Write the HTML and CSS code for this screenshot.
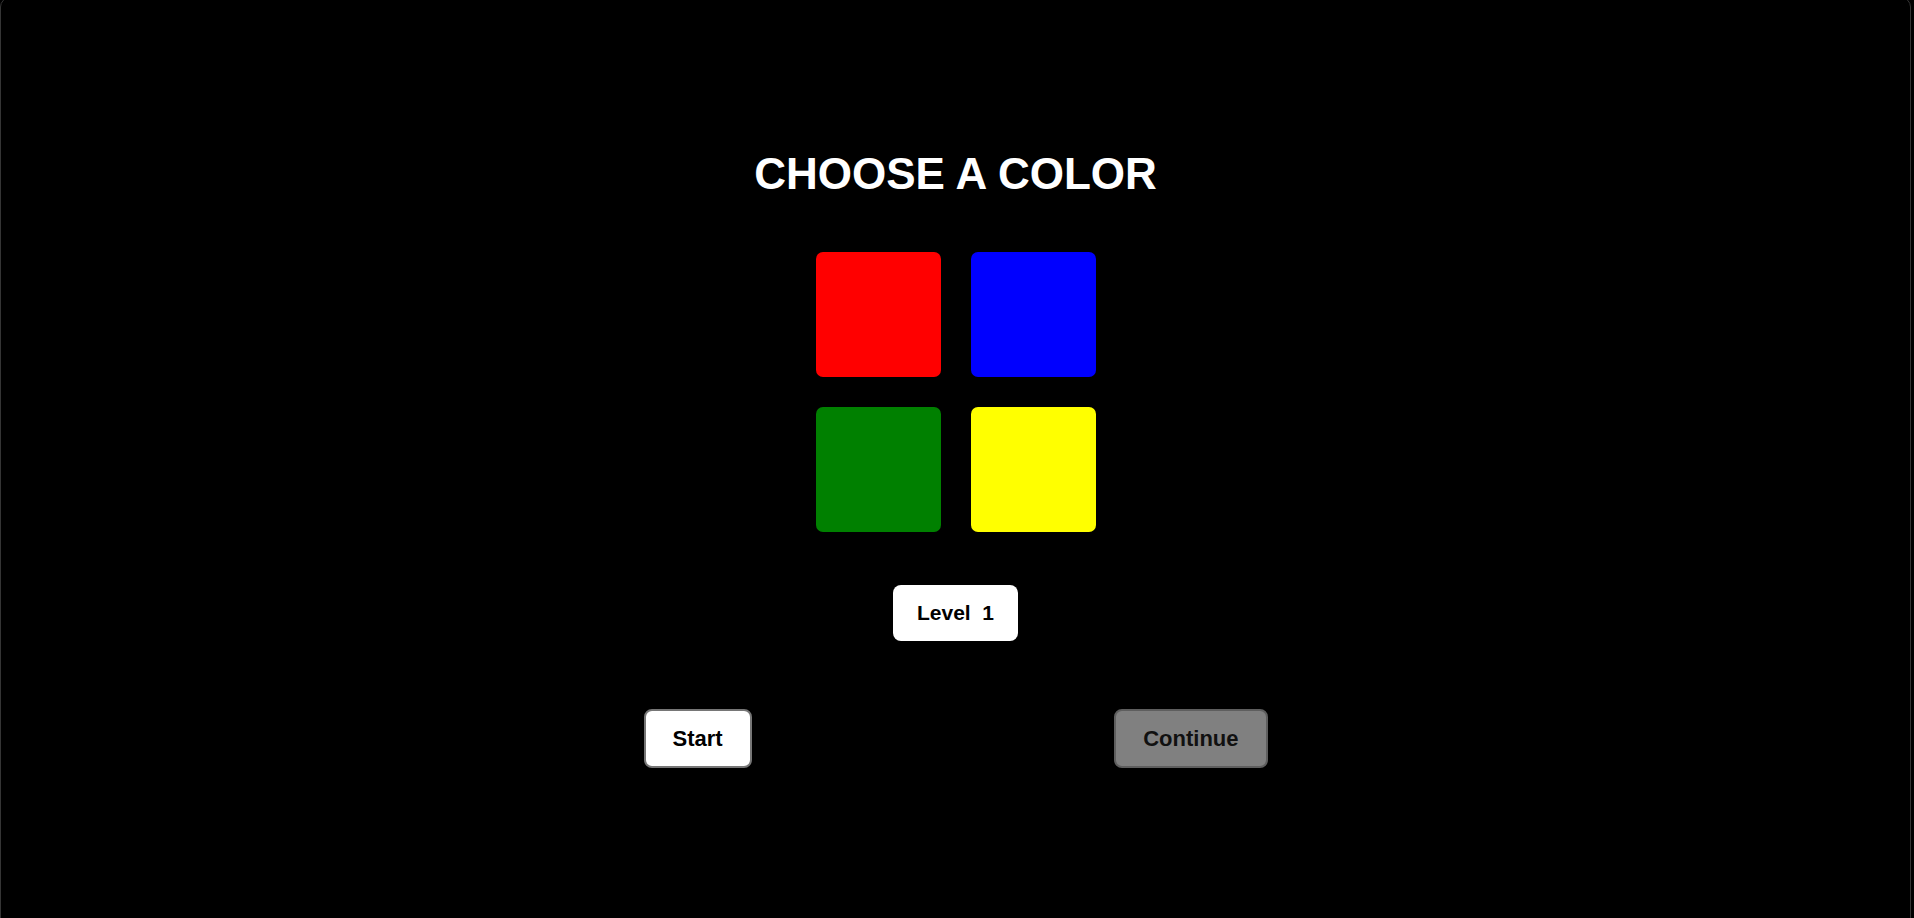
FILE: index.html
```html
<!DOCTYPE html>
<html lang="en">
<head>
    <meta charset="UTF-8">
    <meta name="viewport" content="width=device-width, initial-scale=1.0">
    <title>Choose a Color</title>
    <link rel="stylesheet" href="styles.css">
</head>
<body>
    <div id="game">
        <h1>CHOOSE A COLOR</h1>

        <div class="colors">
            <div class="color red"></div>
            <div class="color blue"></div>
            <div class="color green"></div>
            <div class="color yellow"></div>
        </div>

        <div class="level">Level&nbsp; <span id="levelNum">1</span></div>

        <div class="controls">
            <button class="btn start">Start</button>
            <button class="btn continue" disabled>Continue</button>
        </div>
    </div>
</body>
</html>
```

FILE: styles.css
```css
html, body {
    margin: 0;
    background: #000;
}
body {
    font-family: "Liberation Sans", Arial, sans-serif;
    overflow: hidden;
}
#game {
    box-sizing: border-box;
    width: 1911px;
    height: 940px;
    margin-top: -3px;
    border: 1px solid #353535;
    border-radius: 10px;
    display: flex;
    flex-direction: column;
    align-items: center;
    padding-top: 150px;
}
h1 {
    margin: 0;
    color: #fff;
    font-size: 44px;
    font-weight: bold;
    line-height: 52px;
}
.colors {
    display: grid;
    grid-template-columns: 125px 125px;
    grid-auto-rows: 125px;
    gap: 30px;
    margin-top: 52px;
}
.color {
    border-radius: 7px;
}
.red { background: #f00; }
.blue { background: #00f; }
.green { background: #008000; }
.yellow { background: #ff0; }
.level {
    margin-top: 53px;
    width: 125px;
    height: 56px;
    line-height: 56px;
    text-align: center;
    background: #fff;
    border-radius: 8px;
    font-size: 21px;
    font-weight: bold;
    color: #000;
}
.controls {
    margin-top: 68px;
    width: 624px;
    display: flex;
    justify-content: space-between;
}
.btn {
    height: 59px;
    padding: 0 27px;
    font-family: inherit;
    font-size: 22px;
    font-weight: bold;
    color: #000;
    background: #fff;
    border: 2px solid #767676;
    border-radius: 8px;
    cursor: pointer;
}
.continue {
    background: #808080;
    border-color: #5e5e5e;
    color: #111;
    cursor: default;
}
```
